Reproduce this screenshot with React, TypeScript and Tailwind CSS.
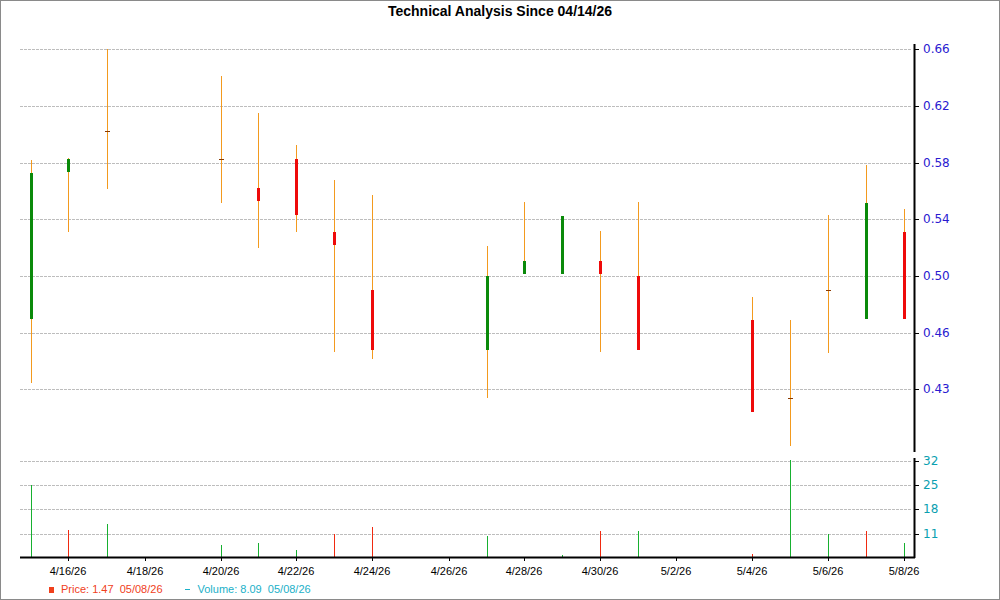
type Candle = { x: number; hi: number; lo: number; bt?: number; bb?: number; dash?: number; c: "g" | "r" };

const candles: Candle[] = [
  { x: 31, hi: 160, lo: 383, bt: 173, bb: 319, c: "g" },
  { x: 68, hi: 158, lo: 232, bt: 159, bb: 172, c: "g" },
  { x: 107, hi: 49, lo: 189, dash: 131, c: "g" },
  { x: 221, hi: 76, lo: 203, dash: 159, c: "g" },
  { x: 258, hi: 113, lo: 248, bt: 188, bb: 201, c: "r" },
  { x: 296, hi: 145, lo: 232, bt: 159, bb: 215, c: "r" },
  { x: 334, hi: 180, lo: 352, bt: 232, bb: 245, c: "r" },
  { x: 372, hi: 195, lo: 359, bt: 290, bb: 350, c: "r" },
  { x: 487, hi: 246, lo: 398, bt: 276, bb: 350, c: "g" },
  { x: 524, hi: 202, lo: 274, bt: 261, bb: 274, c: "g" },
  { x: 562, hi: 216, lo: 274, bt: 216, bb: 274, c: "g" },
  { x: 600, hi: 231, lo: 352, bt: 261, bb: 274, c: "r" },
  { x: 638, hi: 202, lo: 350, bt: 276, bb: 350, c: "r" },
  { x: 752, hi: 297, lo: 412, bt: 320, bb: 412, c: "r" },
  { x: 790, hi: 320, lo: 446, dash: 398, c: "g" },
  { x: 828, hi: 215, lo: 353, dash: 290, c: "g" },
  { x: 866, hi: 165, lo: 319, bt: 203, bb: 319, c: "g" },
  { x: 904, hi: 209, lo: 319, bt: 232, bb: 319, c: "r" },
];

const volumes: [number, number, "g" | "r"][] = [
  [31, 485, "g"], [68, 530, "r"], [107, 524, "g"], [221, 545, "g"], [258, 543, "g"],
  [296, 550, "g"], [334, 534, "r"], [372, 527, "r"], [487, 536, "g"], [562, 555, "g"],
  [600, 531, "r"], [638, 531, "g"], [752, 554, "r"], [790, 460, "g"], [828, 534, "g"],
  [866, 531, "r"], [904, 543, "g"],
];

const priceTicks: [number, string][] = [
  [49, "0.66"], [106, "0.62"], [163, "0.58"], [219, "0.54"], [276, "0.50"], [333, "0.46"], [389, "0.43"],
];
const volTicks: [number, string][] = [[461, "32"], [485, "25"], [509, "18"], [534, "11"]];
const dates: [number, string][] = [
  [68, "4/16/26"], [145, "4/18/26"], [221, "4/20/26"], [296, "4/22/26"], [372, "4/24/26"], [449, "4/26/26"],
  [524, "4/28/26"], [600, "4/30/26"], [676, "5/2/26"], [752, "5/4/26"], [828, "5/6/26"], [904, "5/8/26"],
];

const GREEN = "#0a8a0a";
const RED = "#ee0a0a";
const WICK = "#f39a1e";
const SANS = "'Liberation Sans', Arial, sans-serif";
const AXIS = "'DejaVu Sans', Verdana, sans-serif";

export default function App() {
  return (
    <div className="w-[1000px] h-[600px] border border-[#8a8a8a] bg-white flex flex-col font-[Liberation_Sans,Arial,sans-serif]">
      <div className="h-5 flex items-center justify-center text-[14px] font-bold text-black">Technical Analysis Since 04/14/26</div>
      <svg width={998} height={559} viewBox="1 21 998 559" className="block">
        {priceTicks.map(([y]) => (
          <line key={y} x1={20} x2={912} y1={y + 0.5} y2={y + 0.5} stroke="#bdbdbd" strokeDasharray="3 1" />
        ))}
        {volTicks.map(([y]) => (
          <line key={y} x1={20} x2={912} y1={y + 0.5} y2={y + 0.5} stroke="#bdbdbd" strokeDasharray="3 1" />
        ))}
        {candles.map((c) => (
          <g key={c.x}>
            <line x1={c.x + 0.5} x2={c.x + 0.5} y1={c.hi} y2={c.lo} stroke={WICK} />
            {c.bt !== undefined && (
              <rect x={c.x - 1} y={c.bt} width={3} height={c.bb! - c.bt} fill={c.c === "g" ? GREEN : RED} />
            )}
            {c.dash !== undefined && <line x1={c.x - 2} x2={c.x + 3} y1={c.dash + 0.5} y2={c.dash + 0.5} stroke="#8a3a00" />}
          </g>
        ))}
        {volumes.map(([x, y, c]) => (
          <line key={x} x1={x + 0.5} x2={x + 0.5} y1={y} y2={557} stroke={c === "g" ? "#17b030" : "#f02a10"} />
        ))}
        <line x1={914.5} x2={914.5} y1={44} y2={452} stroke="#000" strokeWidth={2} />
        <line x1={914.5} x2={914.5} y1={458} y2={558} stroke="#000" strokeWidth={2} />
        <line x1={20} x2={915} y1={557.5} y2={557.5} stroke="#000" strokeWidth={2} />
        {priceTicks.map(([y, t]) => (
          <g key={t}>
            <line x1={915} x2={919} y1={y + 0.5} y2={y + 0.5} stroke="#000" />
            <text x={923} y={y + 4} fontSize={12} fill="#2a1ad0" style={{ fontFamily: AXIS }}>{t}</text>
          </g>
        ))}
        {volTicks.map(([y, t]) => (
          <g key={t}>
            <line x1={915} x2={919} y1={y + 0.5} y2={y + 0.5} stroke="#000" />
            <text x={923} y={y + 4} fontSize={12} fill="#0aa0b0" style={{ fontFamily: AXIS }}>{t}</text>
          </g>
        ))}
        {dates.map(([x, t]) => (
          <g key={t}>
            <line x1={x + 0.5} x2={x + 0.5} y1={558} y2={561} stroke="#000" />
            <text x={x} y={575} fontSize={11} textAnchor="middle" fill="#000" style={{ fontFamily: SANS }}>{t}</text>
          </g>
        ))}
      </svg>
      <div className="h-[19px] flex items-center pl-[48px] gap-[22px] text-[11px] leading-none">
        <span className="text-[#f0401c] flex items-center gap-[7px]">
          <span className="w-[5px] h-[6px] bg-[#f0401c] inline-block" />
          Price: 1.47&nbsp; 05/08/26
        </span>
        <span className="text-[#1ab0c8] flex items-center gap-[8px]">
          <span className="w-[5px] h-[1px] bg-[#1ab0c8] inline-block" />
          Volume: 8.09&nbsp; 05/08/26
        </span>
      </div>
    </div>
  );
}
